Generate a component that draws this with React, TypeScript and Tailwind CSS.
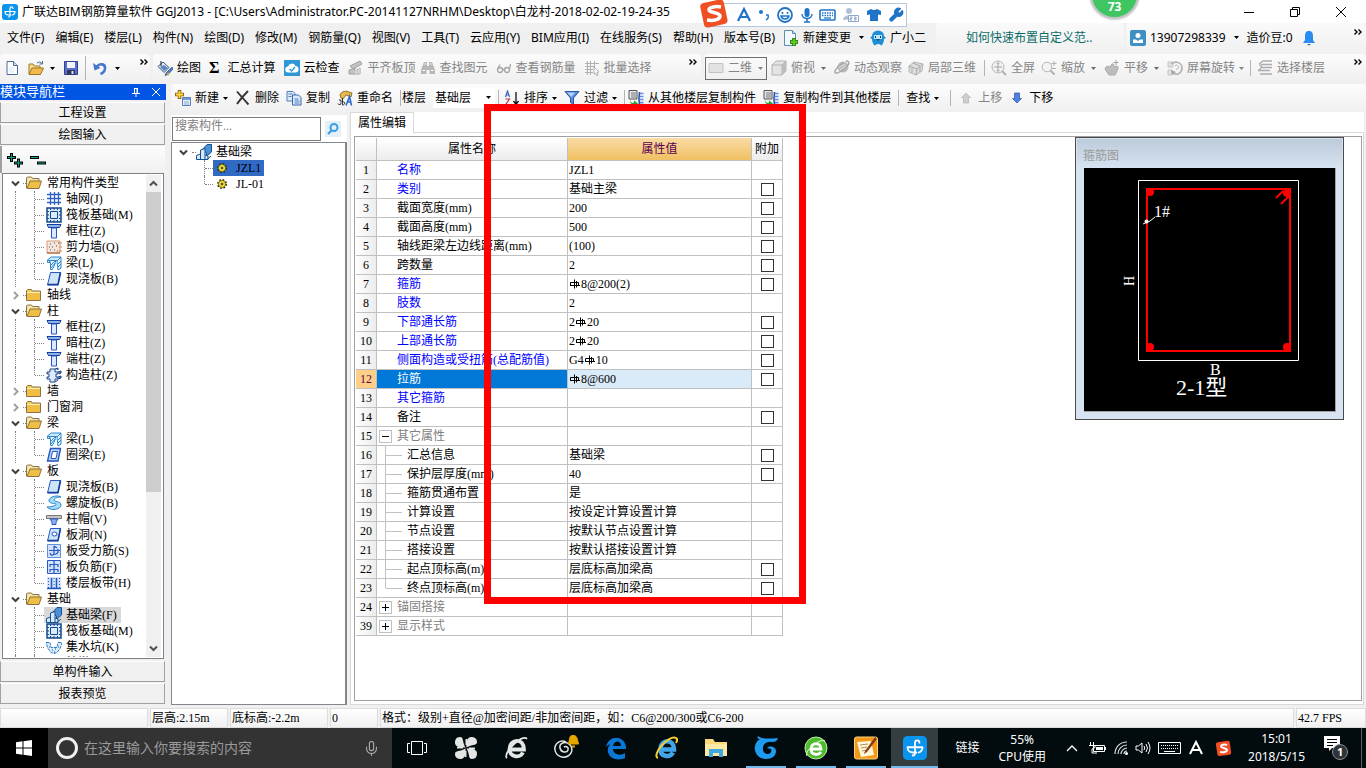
import type { ReactNode } from "react";
import { LuWrench, LuMic } from "react-icons/lu";

const ui = "[font-family:'Noto_Sans','Noto_Sans_CJK_SC',sans-serif]";
const song = "[font-family:'Liberation_Serif','Noto_Sans_CJK_SC',serif]";

/* ---------- icons ---------- */

function Svg({ children, size = 16, className = "" }: { children: ReactNode; size?: number; className?: string }) {
  return (
    <svg width={size} height={size} viewBox="0 0 16 16" fill="none" aria-hidden="true" className={`shrink-0 ${className}`}>
      {children}
    </svg>
  );
}

const icons: Record<string, ReactNode> = {
  doc: (
    <Svg>
      <path d="M3 1.500h6.500l4 4v9H3z" fill="#fff" stroke="#4b6c94" />
      <path d="M9.500 1.500v4h4" fill="#cfe0f2" stroke="#4b6c94" />
      <path d="M5 7h5v6H5z" fill="#eaf3fb" />
    </Svg>
  ),
  open: (
    <Svg>
      <path d="M1 14V4h4l1.500 2H12v2" fill="#f7dc8c" stroke="#9b7420" />
      <path d="M1 14.500 4 8h11.500l-3 6.500z" fill="#f3b94a" stroke="#9b7420" />
      <path d="M9 3q3-2.500 5 .5M14.500 1v3h-3" stroke="#4a6f96" />
    </Svg>
  ),
  save: (
    <Svg>
      <path d="M1.500 1.500h13v13h-13z" fill="#5b6fc9" stroke="#31408e" />
      <path d="M4 2h8v6H4z" fill="#f1f4fd" />
      <path d="M4 10h8v4.500H4z" fill="#30355c" />
      <path d="M8.500 11h2v3h-2z" fill="#dfe5ff" />
    </Svg>
  ),
  undo: (
    <Svg>
      <path d="M4.500 7C8 2.500 13.500 4 13 8.500c-.2 3-2 4.500-4.500 5.500" stroke="#4677cf" strokeWidth="2.600" />
      <path d="M1 3l1.500 7.500L8.500 8z" fill="#4677cf" />
    </Svg>
  ),
  paint: (
    <Svg>
      <path d="M1 6.500 6 2l6 5.500-5 5z" fill="#dce8f5" stroke="#3f5a80" />
      <path d="M3 7l4-2 4 3-4 3z" fill="#5c86c2" />
      <path d="M4 1v5" stroke="#222" />
      <path d="M15 7 9 13l-1 2.500 3-1L16 9z" fill="#4c7ac5" stroke="#2b4f8e" strokeWidth=".7" />
      <path d="M10.500 13 12 15" stroke="#e3b53c" strokeWidth="2" />
    </Svg>
  ),
  cloud: (
    <Svg>
      <path d="M0 0h16v16H0z" fill="#2f97d6" />
      <path d="M4.500 12.500a3 3 0 0 1-.5-6 4 4 0 0 1 7.500-.5 3.300 3.300 0 0 1 .5 6.500z" fill="#fff" />
      <path d="m5.500 9 2 2 3.500-4" stroke="#2f97d6" strokeWidth="1.300" />
    </Svg>
  ),
  align: (
    <Svg>
      <path d="M2 6 12 1l2 3-9 5zM1 10l6-2v3l5-3v6H1z" fill="#c3c3c3" stroke="#9f9f9f" />
      <path d="M8 9v5M11 8v6" stroke="#eee" />
    </Svg>
  ),
  find: (
    <Svg>
      <path d="M4 2h3v4h2V2h3l3 8v4H9.500v-4h-3v4H1v-4z" fill="#b7b7b7" />
      <path d="M2.500 10.500H5M11 10.500h2.500M4.500 4H6M10 4h1.500" stroke="#fff" />
    </Svg>
  ),
  glasses: (
    <Svg>
      <circle cx="4" cy="10" r="2.500" stroke="#a4a4a4" strokeWidth="1.300" />
      <circle cx="11" cy="10" r="2.500" stroke="#a4a4a4" strokeWidth="1.300" />
      <path d="M6.500 9.500h2M1.500 9.500 4 4.500M13.500 9.500 14.500 4" stroke="#a4a4a4" strokeWidth="1.300" />
    </Svg>
  ),
  batch: (
    <Svg>
      <path d="M1 3.500h14M1 6.500h10M1 9.500h8M1 12.500h8M3.500 1v14M6.500 1v14M10.500 1v6" stroke="#b0b0b0" />
      <path d="m10 7 5 5-2 .3 1 2.700-1.500.5-1-2.500-1.500 1z" fill="#fff" stroke="#a0a0a0" strokeWidth=".8" />
    </Svg>
  ),
  flat: (
    <Svg>
      <path d="M1 3.500h14v9H1z" fill="#e2e2e2" stroke="#c4c4c4" />
    </Svg>
  ),
  cube: (
    <Svg>
      <path d="m1 5 4-4h10v10l-4 4H1z" fill="#e4e4e4" stroke="#b2b2b2" />
      <path d="M1 5h10v10M11 5l4-4" stroke="#b2b2b2" />
      <path d="m11 5 4-4v10l-4 4z" fill="#bdbdbd" />
    </Svg>
  ),
  orbit: (
    <Svg>
      <circle cx="9" cy="7" r="5.500" fill="#bcbcbc" />
      <path d="M12 1c5 0 3 5-3 9s-9 4-8 1 6-7 9-8" stroke="#a3a3a3" strokeWidth="1.400" />
      <path d="M5 7 11 4M6 10l6-4" stroke="#e2e2e2" />
    </Svg>
  ),
  part3d: (
    <Svg>
      <path d="m1 6 5-4 9 2-1 7-6 4-7-3z" fill="#dedede" stroke="#b4b4b4" />
      <path d="m1 6 8 3 6-5M9 9l-1 6M5 3l7 3v6M4 7.500v5" stroke="#a9a9a9" />
    </Svg>
  ),
  full: (
    <Svg>
      <circle cx="7" cy="7" r="6" fill="#f2f2f2" stroke="#b5b5b5" />
      <path d="M7 3v8M3 7h8M5.500 4 7 2.500 8.500 4M5.500 10 7 11.500 8.500 10" stroke="#a5a5a5" />
      <path d="m11 11 4 4" stroke="#b0b0b0" strokeWidth="2" />
    </Svg>
  ),
  zoom: (
    <Svg>
      <circle cx="6" cy="7" r="4.800" fill="#f4f4f4" stroke="#b5b5b5" />
      <path d="m9.500 10.500 4 4" stroke="#b0b0b0" strokeWidth="2" />
      <path d="M13 1v5M10.500 3.500h5M11 8.500h4" stroke="#b0b0b0" />
    </Svg>
  ),
  pan: (
    <Svg>
      <path d="M2 7c2-2 3 0 4 0l2-3c2-1 2 2 2 3l3-1c2 1 1 3 0 5l-2 4H5L1 9z" fill="#bdbdbd" stroke="#a9a9a9" />
      <path d="M12 0v5M9.500 2.500h5" stroke="#a5a5a5" />
    </Svg>
  ),
  rotate: (
    <Svg>
      <path d="M1 2h5v5H1zM1 10h4v5H1z" fill="#e3e3e3" stroke="#c3c3c3" />
      <path d="M4 4c5-4 11-1 11 4s-5 8-9 5" stroke="#b3b3b3" strokeWidth="1.600" />
      <path d="m4 10 1 5 4-3z" fill="#a6a6a6" />
      <path d="M8 6a2 2 0 1 1 1 3" stroke="#b3b3b3" />
    </Svg>
  ),
  floors: (
    <Svg>
      <path d="m2 4 4-3h9M4 4.500h11M5 7.500h10M1 10.500h12M3 14h12M2 4l3 3-4 4" stroke="#adadad" strokeWidth="1.300" />
    </Svg>
  ),
  add: (
    <Svg>
      <path d="M4.500 0v9M0 4.500h9" stroke="#8a6a1a" strokeWidth="3.500" />
      <path d="M4.500 1v7M1 4.500h7" stroke="#ffd23e" strokeWidth="1.800" />
      <path d="M7.500 7.500h8v8h-8z" fill="#e9f1fb" stroke="#5b7fb5" />
      <path d="M8 8h7v2H8z" fill="#6c9be0" />
      <path d="M9 12h5M9 14h5" stroke="#88a6d2" />
    </Svg>
  ),
  del: (
    <Svg>
      <path d="M2 1.500C5 5 9 9.500 13.500 14.500M13 1C9 5 5 9.500 2 14" stroke="#333" strokeWidth="1.900" />
    </Svg>
  ),
  copy: (
    <Svg>
      <path d="M1 1.500h6l2 2V11H1z" fill="#dcebfb" stroke="#4f7dbd" />
      <path d="M6.500 5h6L15 7.500V15H6.500z" fill="#dcebfb" stroke="#3a67ac" />
      <path d="M2.500 4h4M2.500 6.500h3M8.500 9h4M8.500 11h5M8.500 13h5" stroke="#4f7dbd" />
    </Svg>
  ),
  rename: (
    <Svg>
      <path d="M3 5C5 0 8 2 9 1l6 2-1 4-5-2-3 4-2-1z" fill="#e6b84c" stroke="#7c5b17" strokeWidth=".8" />
      <path d="M1 13.500a1.500 1.500 0 1 0 3-1V10H2M5.500 8v7c3 0 3-4 0-3" stroke="#333" />
      <path d="m9 15.500 3.500-9 2 9M10.500 12h3.500" stroke="#2b6bd0" strokeWidth="1.600" />
    </Svg>
  ),
  sort: (
    <Svg>
      <path d="m1.500 7 2-6 2 6M2.500 5h2" stroke="#3b66b8" strokeWidth="1.200" />
      <path d="M1.500 9h4l-4 6h4" stroke="#b23b4d" strokeWidth="1.200" />
      <path d="M12 2v12M9.500 11l2.500 3.500 2.500-3.500" stroke="#111" strokeWidth="1.300" />
    </Svg>
  ),
  filter: (
    <Svg>
      <path d="M1 1.500h14L9.500 8v6.500l-3-2V8z" fill="#5a8be0" stroke="#2b56a6" />
      <path d="M3 2.500h8L7.500 7z" fill="#b7d0f8" />
    </Svg>
  ),
  fromFloor: (
    <Svg>
      <path d="M1 .5h8V9H1z" fill="#e8e8e8" stroke="#555" />
      <path d="M3 3h5M3 5h5M3 7h5" stroke="#777" />
      <path d="M11.500 2q-1 7 0 13" stroke="#2d55a5" strokeWidth="1.600" />
      <path d="M12 3.500h3.500M12 6.500h3.500M12 9.500h3.500M12 12.500h3.500M12 14.500h3.500" stroke="#5f8fe0" strokeWidth="1.400" />
      <path d="M2 10q1 4 4 2.500V10.500l4 3-4 2.500v-1.500q-4 0-4-4.500" fill="#29a03b" />
    </Svg>
  ),
  up: (
    <Svg>
      <path d="m8 3 4.500 4.500h-2V13h-5V7.500h-2z" fill="#cdcdcd" stroke="#b5b5b5" strokeWidth=".7" />
    </Svg>
  ),
  down: (
    <Svg>
      <path d="m8 13 4.500-4.500h-2V3h-5v5.500h-2z" fill="#4f7fe0" stroke="#2a51a8" strokeWidth=".7" />
    </Svg>
  ),
  change: (
    <Svg>
      <path d="M1.500.5h8l3 3v12h-11z" fill="#f3f9fe" stroke="#5c8db5" />
      <path d="M9.500.5v3h3" fill="#bcd9ee" stroke="#5c8db5" />
      <path d="M11 8v8M7 12h8" stroke="#2e8f1a" strokeWidth="4" />
      <path d="M11 9v6M8 12h6" stroke="#69c62a" strokeWidth="2" />
    </Svg>
  ),
  mascot: (
    <Svg>
      <path d="M2 6a6 5.500 0 0 1 12 0l2 2-2 1c0 3-1 5-2.500 6.500L9 14l-2 .2-2.500 1.300C3 14 2 11 2 9L0 8z" fill="#1e8fd5" />
      <path d="M4 5h8v4H4z" fill="#bfe6fb" />
      <path d="M5.500 6v2M10.500 6v2M6.500 9.500q1.500 1 3 0" stroke="#083b66" />
    </Svg>
  ),
  folder: (
    <Svg>
      <path d="M.5 13.500v-10l1-1h4l1 1.500h8v9.500z" fill="#f4cb5e" stroke="#8b7440" />
      <path d="M1 6h13v7H1z" fill="#f0bd45" />
      <path d="M1 5.500h13" stroke="#fdeeb8" />
    </Svg>
  ),
  folderOpen: (
    <Svg>
      <path d="M.5 13V3l1-1h4l1 1.500H13V6" fill="#f8e4a8" stroke="#8b7440" />
      <path d="M1 13.500 4 6h11.500L13 13.500z" fill="#f0bd45" stroke="#8b7440" />
    </Svg>
  ),
  grid: (
    <Svg>
      <path d="M4.500 1v13M8.500 1v13M12.500 1v13M1 3.500h14M1 7.500h14M1 11.500h14" stroke="#2f62c5" strokeWidth="1.300" />
    </Svg>
  ),
  raft: (
    <Svg>
      <path d="M1 1h14v14H1z" fill="#d9ecfb" stroke="#15478c" strokeWidth="1.500" />
      <path d="M4.500 4.500h7v7h-7zM4.500 1v2M8 1v2M11.500 1v2M4.500 13v2M8 13v2M11.500 13v2M1 4.500h2M1 8h2M1 11.500h2M13 4.500h2M13 8h2M13 11.500h2" stroke="#15478c" />
    </Svg>
  ),
  column: (
    <Svg>
      <path d="M1 1.500h14l-1.500 3h-11z" fill="#8fb2ee" stroke="#123f9c" />
      <path d="M5.500 5h5v10h-5z" fill="#dce9ff" stroke="#2457c4" />
    </Svg>
  ),
  wall: (
    <Svg>
      <path d="M1 2h13v12H1z" fill="#f5e5dc" stroke="#d79a78" />
      <path d="M4 5h1M8 4h1M6 8h1M10 7h1M4 11h1M8 11h1M11 12h1M3 8h1M12 4h1" stroke="#555" />
      <path d="M1 14h13" stroke="#a3542c" />
      <path d="M13 4h3M13 8h3M13 12h3" stroke="#e08b3c" />
    </Svg>
  ),
  beam: (
    <Svg>
      <path d="M1 5.500 5 2h10l-3 3.500z" fill="#cfe8fb" stroke="#2a86cf" />
      <path d="M1.500 5.500h8v2l-3 7h-2v-7h-3zM11 6l4-4v11l-3 2z" fill="#e9f6ff" stroke="#2a86cf" />
      <path d="m3 7 2-1.500M5 10l4-4M5 13l4-5M12 9l3-3M12 12l3-3" stroke="#2a86cf" />
    </Svg>
  ),
  slab: (
    <Svg>
      <path d="M4.500 1.500h10L12 14H1.500z" fill="#cfe3fb" stroke="#2457c4" />
      <path d="M1.500 13.500h10.500l2.500-12" stroke="#123f9c" strokeWidth="1.600" />
    </Svg>
  ),
  tie: (
    <Svg>
      <path d="M4 2h5v3h3v2h-2v3h2v2H9v3H4v-3H1v-2h2V7H1V5h3z" fill="#dce9ff" stroke="#1c4287" />
      <path d="m9 2 3-1v2M12 5l3-1v2l-2 1M12 10l3-1v2l-3 1M9 15l3-2" fill="#4f7dbd" stroke="#1c4287" />
    </Svg>
  ),
  ring: (
    <Svg>
      <path d="M4.500 1.500h10L12 14H1.500z" fill="#b9d2f7" stroke="#2457c4" strokeWidth="1.400" />
      <path d="M6.500 4.500h5L10 11.500H5z" fill="#fff" stroke="#2457c4" />
    </Svg>
  ),
  spiral: (
    <Svg>
      <path d="M15 2C10-1 2 3 3 6s6 2 7 3-4 3-9 3c3 4 14 3 14-2 0-4-7-3-7-5s4-3 7-3z" fill="#a5dcf8" stroke="#2383cc" />
    </Svg>
  ),
  cap: (
    <Svg>
      <path d="M.5 4.500h15v3H.5z" fill="#c4c4c4" stroke="#777" />
      <path d="M4 8h8l-2 3v2.500H6V11z" fill="#8db2f2" stroke="#2457c4" />
    </Svg>
  ),
  hole: (
    <Svg>
      <path d="M4.500 1.500h10L12 14H1.500z" fill="#cfe3fb" stroke="#2457c4" />
      <path d="M1.500 13.500h10.500l2.500-12" stroke="#123f9c" strokeWidth="1.500" />
      <ellipse cx="8.500" cy="7" rx="2.500" ry="2" fill="#fff" stroke="#2457c4" />
    </Svg>
  ),
  stress: (
    <Svg>
      <path d="M1.500 1.500h13v13h-13z" fill="#d3e2fb" stroke="#5f8fe0" />
      <path d="M3 7.500h11M8 3v8q-3 3-4-1M8 3l3 2M12 6v3q-1 3-4 2" stroke="#2457c4" strokeWidth="1.200" />
    </Svg>
  ),
  negative: (
    <Svg>
      <path d="M1.500 1.500h13v13h-13z" fill="#d3e2fb" stroke="#2457c4" />
      <path d="M8 2v12M4 5.500h8M4 10.500h8M4 5v3M12 5v3M4 10v3M12 10v3" stroke="#2457c4" strokeWidth="1.200" />
    </Svg>
  ),
  strip: (
    <Svg>
      <path d="M1 2h14v12H1z" fill="#d3e2fb" />
      <path d="M1 13.500h14M5.500 3v10M10.500 3v10" stroke="#2457c4" strokeWidth="1.500" />
      <path d="M2.500 3v10M8 3v10M13.500 3v10" stroke="#2457c4" strokeDasharray="1 2" />
    </Svg>
  ),
  footing: (
    <Svg>
      <path d="M6 6 11 .5h4.500V8l-5 4.500V9z" fill="#4a90d6" stroke="#16518f" />
      <path d="M.5 15.500v-4l4-1.500V6L9 4.500V11l3 1v3.500z" fill="#d5e9fa" stroke="#16518f" />
      <path d="M4.500 10v5M9 11v4M11 15.500l4-3.500" stroke="#16518f" />
    </Svg>
  ),
  pit: (
    <Svg>
      <path d="M0 3.500h4l1 5h6l1-5h4l-2 6-3 4-3 1-3-1-3-4z" fill="#d8ecfc" stroke="#2878c8" strokeDasharray="3 1" />
      <path d="M3 8h1M6 11h1M9 10h1M12 8h1M8 13h1" stroke="#16518f" />
    </Svg>
  ),
  gear: (
    <Svg>
      <circle cx="8" cy="8" r="4" stroke="#222" strokeWidth="2" strokeDasharray="1.600 1.550" />
      <circle cx="8" cy="8" r="3.500" fill="#ffef3c" stroke="#7a7000" />
      <circle cx="8" cy="8" r="1" fill="#fff" stroke="#222" />
    </Svg>
  ),
};

function GlodonMark({ size }: { size: number }) {
  return (
    <Svg size={size}>
      <rect width="16" height="16" rx="3" fill="#0a94ee" />
      <path
        d="M8 4.500V11.500q0 1.500-1.500 1.500M3 7.500h10M3 7.500c0 2.500 2 3.500 3.500 3.500H9M8 4.500c0-2.200 3-2.200 3 0M13 7.500c0 2-1 3-2.500 3.500"
        stroke="#fff"
        strokeWidth="1.200"
        strokeLinecap="round"
      />
    </Svg>
  );
}

function Caret({ className = "" }: { className?: string }) {
  return (
    <svg width="5" height="3" viewBox="0 0 5 3" aria-hidden="true" className={`shrink-0 ${className}`}>
      <path d="M0 0h5L2.500 3z" fill="currentColor" />
    </svg>
  );
}

function Chevron({ dir, className = "" }: { dir: "up" | "down" | "right"; className?: string }) {
  const d = { up: "M1 6.500 4.500 3 8 6.500", down: "M1 2.500 4.500 6 8 2.500", right: "M3 1l3.500 3.500L3 8" }[dir];
  return (
    <svg width="9" height="9" viewBox="0 0 9 9" fill="none" aria-hidden="true" className={`shrink-0 ${className}`}>
      <path d={d} stroke="currentColor" strokeWidth="2" />
    </svg>
  );
}

function More({ className = "" }: { className?: string }) {
  return (
    <svg width="8" height="6" viewBox="0 0 8 6" fill="none" aria-hidden="true" className={`shrink-0 ${className}`}>
      <path d="m.5.5 2.500 2.500L.5 5.500M4.500.5 7 3 4.500 5.500" stroke="#000" strokeWidth="1.400" />
    </svg>
  );
}

// HRB400 bar grade sign, drawn because no font carries it
function Rebar() {
  return (
    <svg width="12" height="12" viewBox="0 0 12 12" fill="none" role="img" aria-label="HRB400" className="inline-block align-[-2px]">
      <path d="M1.500 8V4.500h8v3H1.500M5.500 1.500v9M7.500 3v6.500M1 7.500h10" stroke="#000" />
    </svg>
  );
}

/* ---------- toolbars ---------- */

type ToolProps = { icon?: string; label: string; caret?: boolean; disabled?: boolean; className?: string };

function Tool({ icon, label, caret, disabled, className = "" }: ToolProps) {
  return (
    <button
      type="button"
      disabled={disabled}
      className={`flex shrink-0 items-center gap-1 whitespace-nowrap ${disabled ? "text-[#858585]" : "text-black"} ${className}`}
    >
      {icon && icons[icon]}
      <span>{label}</span>
      {caret && <Caret />}
    </button>
  );
}

function Sep({ className = "" }: { className?: string }) {
  return <span className={`h-4 w-px shrink-0 bg-[#b4b4b4] ${className}`} />;
}

const menus = [
  "文件(F)", "编辑(E)", "楼层(L)", "构件(N)", "绘图(D)", "修改(M)", "钢筋量(Q)", "视图(V)",
  "工具(T)", "云应用(Y)", "BIM应用(I)", "在线服务(S)", "帮助(H)", "版本号(B)",
];

function TitleBar() {
  return (
    <header className="flex h-[23px] shrink-0 items-center bg-white">
      <span className="ml-0.5">
        <GlodonMark size={16} />
      </span>
      <h1 className="ml-1 flex-1 overflow-hidden text-xs leading-5 whitespace-nowrap">
        广联达BIM钢筋算量软件 GGJ2013 - [C:\Users\Administrator.PC-20141127NRHM\Desktop\白龙村-2018-02-02-19-24-35
      </h1>
      <div className="mr-5 flex items-center gap-9">
        <button type="button" aria-label="最小化">
          <svg width="10" height="10" viewBox="0 0 10 10"><path d="M0 5.500h10" stroke="#000" /></svg>
        </button>
        <button type="button" aria-label="还原">
          <svg width="10" height="10" viewBox="0 0 10 10" fill="none">
            <path d="M.5 2.500h7v7h-7zM2.500 2.500v-2h7v7h-2" stroke="#000" />
          </svg>
        </button>
        <button type="button" aria-label="关闭">
          <svg width="10" height="10" viewBox="0 0 10 10"><path d="m0 0 10 10M10 0 0 10" stroke="#000" /></svg>
        </button>
      </div>
    </header>
  );
}

function MenuBar() {
  return (
    <nav className="flex h-[31px] shrink-0 items-stretch text-xs leading-4 whitespace-nowrap">
      <div className="flex items-center gap-[11px] pb-0.5 pl-[7px]">
        {menus.map((m) => (
          <button key={m} type="button">{m}</button>
        ))}
      </div>
      <div className="flex items-center pb-0.5 pl-2">
        <Tool icon="change" label="新建变更" />
        <Caret className="ml-2" />
        <Tool icon="mascot" label="广小二" className="ml-1.5" />
      </div>
      <div className="ml-auto flex w-[188px] items-center rounded-t bg-gradient-to-b from-[#fafafa] to-[#f0f0f0] pb-0.5 pl-[30px]">
        <a href="#tips" className="text-[#0a6b68]">如何快速布置自定义范..</a>
      </div>
      <div className="ml-0.5 flex w-[240px] items-center rounded-t bg-gradient-to-b from-[#fafafa] to-[#f0f0f0] pb-0.5 pl-1">
        <Svg>
          <rect width="16" height="16" rx="2" fill="#3d8fc4" />
          <circle cx="8" cy="5.500" r="2.500" fill="#fff" />
          <path d="M3 13V9.500h3L8 11l2-1.500h3V13z" fill="#fff" />
        </Svg>
        <span className="ml-1">13907298339</span>
        <Caret className="ml-2" />
        <span className="ml-2">造价豆:0</span>
        <Svg className="ml-2">
          <path d="M8 1c3 0 4 2 4 5v4l2 3H2l2-3V6c0-3 1-5 4-5z" fill="#2a8cf0" />
          <path d="M6 14h4l-2 1.500z" fill="#1b5fb0" />
        </Svg>
        <More className="mr-1 mb-3 ml-auto" />
      </div>
    </nav>
  );
}

function MainToolbar() {
  const group = "flex shrink-0 items-center rounded-t bg-gradient-to-b from-[#fcfcfc] to-[#efefef]";
  return (
    <div className="mb-0.5 flex h-7 shrink-0 gap-[3px] text-xs leading-4">
      <div className={`${group} w-[150px] pl-1`}>
        <button type="button" aria-label="新建">{icons.doc}</button>
        <button type="button" aria-label="打开" className="ml-2">{icons.open}</button>
        <Caret className="ml-1.5" />
        <button type="button" aria-label="保存" className="ml-2">{icons.save}</button>
        <Sep className="ml-1.5 h-6" />
        <button type="button" aria-label="撤销" className="ml-1.5">{icons.undo}</button>
        <Caret className="ml-[7px]" />
        <More className="mr-0.5 mb-3 ml-auto" />
      </div>
      <div className={`${group} w-[548px] gap-2 pl-1`}>
        <Tool icon="paint" label="绘图" />
        <button type="button" className="flex items-center gap-2">
          <b className={`${song} text-base leading-4`}>Σ</b>
          <span>汇总计算</span>
        </button>
        <Tool icon="cloud" label="云检查" />
        <Tool icon="align" label="平齐板顶" disabled />
        <Tool icon="find" label="查找图元" disabled className="-ml-1" />
        <Tool icon="glasses" label="查看钢筋量" disabled />
        <Tool icon="batch" label="批量选择" disabled />
        <More className="mr-1 mb-3 ml-auto" />
      </div>
      <div className={`${group} min-w-0 flex-1 gap-1.5 pl-px`}>
        <button type="button" disabled className="flex h-[23px] w-[62px] items-center gap-1 border border-[#6f6f6f] pl-0.5 text-[#858585]">
          {icons.flat}
          <span>二维</span>
          <Caret className="ml-0.5" />
        </button>
        <Tool icon="cube" label="俯视" disabled className="-ml-0.5" />
        <Caret className="text-[#6b6b6b]" />
        <Tool icon="orbit" label="动态观察" disabled className="ml-0.5" />
        <Tool icon="part3d" label="局部三维" disabled />
        <Sep className="ml-0.5" />
        <Tool icon="full" label="全屏" disabled />
        <Tool icon="zoom" label="缩放" disabled />
        <Caret className="mr-0.5 text-[#6b6b6b]" />
        <Tool icon="pan" label="平移" disabled />
        <Caret className="mr-0.5 text-[#6b6b6b]" />
        <Tool icon="rotate" label="屏幕旋转" disabled caret />
        <Sep />
        <Tool icon="floors" label="选择楼层" disabled />
        <More className="mr-1 mb-3 ml-auto" />
      </div>
    </div>
  );
}

function EditToolbar() {
  return (
    <div className="flex h-7 shrink-0 items-center gap-[7px] rounded-t bg-gradient-to-b from-[#fcfcfc] to-[#f0f0f0] pl-1 text-xs leading-4">
      <Tool icon="add" label="新建" caret />
      <Tool icon="del" label="删除" />
      <Tool icon="copy" label="复制" />
      <Tool icon="rename" label="重命名" />
      <Sep />
      <label htmlFor="floor" className="-ml-1.5 shrink-0">楼层</label>
      <span className="relative flex h-5 w-[62px] shrink-0 items-center bg-white">
        <select id="floor" className="w-full appearance-none bg-white pl-0.5 text-xs leading-4">
          <option>基础层</option>
        </select>
        <Caret className="pointer-events-none absolute top-2 right-1" />
      </span>
      <Sep className="-ml-1" />
      <Tool icon="sort" label="排序" caret className="-ml-0.5" />
      <Tool icon="filter" label="过滤" caret />
      <Sep />
      <Tool icon="fromFloor" label="从其他楼层复制构件" className="-ml-1" />
      <Tool icon="fromFloor" label="复制构件到其他楼层" />
      <Sep />
      <Tool label="查找" caret />
      <Sep className="ml-1" />
      <Tool icon="up" label="上移" disabled />
      <Tool icon="down" label="下移" />
    </div>
  );
}

/* ---------- module navigation ---------- */

type TreeItem = { text: string; icon?: string; open?: boolean; active?: boolean };

const tree: TreeItem[] = [
  { text: "常用构件类型", open: true },
  { text: "轴网(J)", icon: "grid" },
  { text: "筏板基础(M)", icon: "raft" },
  { text: "框柱(Z)", icon: "column" },
  { text: "剪力墙(Q)", icon: "wall" },
  { text: "梁(L)", icon: "beam" },
  { text: "现浇板(B)", icon: "slab" },
  { text: "轴线" },
  { text: "柱", open: true },
  { text: "框柱(Z)", icon: "column" },
  { text: "暗柱(Z)", icon: "column" },
  { text: "端柱(Z)", icon: "column" },
  { text: "构造柱(Z)", icon: "tie" },
  { text: "墙" },
  { text: "门窗洞" },
  { text: "梁", open: true },
  { text: "梁(L)", icon: "beam" },
  { text: "圈梁(E)", icon: "ring" },
  { text: "板", open: true },
  { text: "现浇板(B)", icon: "slab" },
  { text: "螺旋板(B)", icon: "spiral" },
  { text: "柱帽(V)", icon: "cap" },
  { text: "板洞(N)", icon: "hole" },
  { text: "板受力筋(S)", icon: "stress" },
  { text: "板负筋(F)", icon: "negative" },
  { text: "楼层板带(H)", icon: "strip" },
  { text: "基础", open: true },
  { text: "基础梁(F)", icon: "footing", active: true },
  { text: "筏板基础(M)", icon: "raft" },
  { text: "集水坑(K)", icon: "pit" },
  { text: "柱墩(Y)", icon: "cap" },
];

function TreeRow({ item, last }: { item: TreeItem; last: boolean }) {
  if (!item.icon) {
    return (
      <li className="flex h-4 items-center pl-2">
        <Chevron dir={item.open ? "down" : "right"} className={item.open ? "text-[#404040]" : "text-[#a0a0a0]"} />
        <span className="ml-[3px] w-[3px] border-t border-dotted border-[#808080]" />
        {item.open ? icons.folderOpen : icons.folder}
        <span className="ml-[5px]">{item.text}</span>
      </li>
    );
  }
  return (
    <li className="flex h-4 items-center pl-3">
      <span className="h-4 w-[19px] border-l border-dotted border-[#808080]" />
      <span className={`w-px self-start border-l border-dotted border-[#808080] ${last ? "h-2" : "h-4"}`} />
      <span className="w-[9px] border-t border-dotted border-[#808080]" />
      <span className={`flex h-4 items-center gap-1 pr-1 pl-0.5 ${item.active ? "bg-[#d9d9d9]" : ""}`}>
        {icons[item.icon]}
        <span>{item.text}</span>
      </span>
    </li>
  );
}

function ModuleButton({ children }: { children: ReactNode }) {
  return (
    <button type="button" className="mb-px h-[21px] w-full shrink-0 border border-[#a0a0a0] border-t-white bg-[#f0f0f0] leading-4">
      {children}
    </button>
  );
}

function ModulePanel() {
  return (
    <aside className={`${song} flex w-[166px] shrink-0 flex-col pb-[3px] text-xs leading-4`}>
      <div className="flex h-4 shrink-0 items-center bg-[#0055e5] text-[13px] text-white">
        <h2 className="flex-1">模块导航栏</h2>
        <svg width="8" height="9" viewBox="0 0 8 9" fill="none" aria-hidden="true" className="mr-3">
          <path d="M2 .5h4M2.500 0v5M5.500 0v5M0 5.500h8M4 5v4M5 0v5" stroke="#fff" />
        </svg>
        <svg width="8" height="8" viewBox="0 0 8 8" aria-hidden="true" className="mr-1.5">
          <path d="m0 0 8 8M8 0 0 8" stroke="#fff" />
        </svg>
      </div>
      <div className="flex min-h-0 flex-1 flex-col pt-0.5 pr-px">
        <ModuleButton>工程设置</ModuleButton>
        <ModuleButton>绘图输入</ModuleButton>
        <div className="flex h-[27px] shrink-0 items-center gap-[7px] border-l-2 border-[#a0a0a0] bg-gradient-to-b from-[#fdfdfd] to-[#f0f0f0] pl-[5px]">
          <svg width="16" height="16" viewBox="0 0 16 16" fill="none" aria-label="展开" role="img">
            <path d="M4.500 1v9M0 5.500h9M11.500 6.500v9M7 11h9" stroke="#000" strokeWidth="3" />
            <path d="M4.500 2v7M1 5.500h7M11.500 7.500v7M8 11h7" stroke="#10a090" />
          </svg>
          <svg width="16" height="16" viewBox="0 0 16 16" fill="none" aria-label="折叠" role="img">
            <path d="M0 5.500h9M7 11h9" stroke="#000" strokeWidth="3" />
            <path d="M1 5.500h7M8 11h7" stroke="#10a090" />
          </svg>
        </div>
        <div className="mr-px mb-0.5 ml-0.5 flex min-h-0 flex-1 border border-[#7d8088] bg-white py-px pr-0.5">
          <ul className="min-w-0 flex-1 overflow-hidden whitespace-nowrap">
            {tree.map((item, i) => (
              <TreeRow key={i} item={item} last={!tree[i + 1]?.icon} />
            ))}
          </ul>
          <div className="flex w-[15px] shrink-0 flex-col items-center bg-[#f0f0f0] text-[#505050]">
            <Chevron dir="up" className="my-1" />
            <div className="h-[300px] w-full bg-[#cdcdcd]" />
            <Chevron dir="down" className="mt-auto mb-1" />
          </div>
        </div>
        <ModuleButton>单构件输入</ModuleButton>
        <ModuleButton>报表预览</ModuleButton>
      </div>
    </aside>
  );
}

/* ---------- component list ---------- */

function ComponentPanel() {
  return (
    <section className={`${song} flex w-[176px] shrink-0 flex-col pt-[3px] pb-[3px] text-xs leading-4`}>
      <div className="flex h-[27px] shrink-0 items-center bg-white">
        <input
          aria-label="搜索构件"
          placeholder="搜索构件..."
          className="ml-px h-6 w-[149px] border border-[#7a7a7a] bg-white px-0.5 pb-1 text-xs placeholder:text-[#808080]"
        />
        <button type="button" aria-label="搜索" className="ml-1">
          <Svg className="bg-[#e2f0fa]">
            <circle cx="9" cy="6.500" r="3.500" stroke="#3a9ee0" strokeWidth="2" />
            <path d="M6.500 9.500 3 13" stroke="#3a9ee0" strokeWidth="2.200" />
          </Svg>
        </button>
      </div>
      <ul className="min-h-0 flex-1 border border-[#828790] border-r-2 bg-white pt-px">
        <li className="flex h-4 items-center pl-[7px]">
          <Chevron dir="down" className="text-[#404040]" />
          <span className="ml-1 w-1 border-t border-dotted border-[#808080]" />
          {icons.footing}
          <span className="ml-1">基础梁</span>
        </li>
        {["JZL1", "JL-01"].map((name, i) => (
          <li key={name} className="flex h-4 items-center pl-8">
            <span className={`w-px self-start border-l border-dotted border-[#808080] ${i ? "h-2" : "h-4"}`} />
            <span className="w-2 border-t border-dotted border-[#808080]" />
            <span className={`flex h-4 items-center gap-1.5 px-px ${i ? "" : "w-[51px] bg-[#316ac5]"}`}>
              {icons.gear}
              <span>{name}</span>
            </span>
          </li>
        ))}
      </ul>
    </section>
  );
}

/* ---------- property grid ---------- */

type Prop = { no: number; name: string; value?: ReactNode; check?: boolean; blue?: boolean; group?: "open" | "closed"; child?: boolean; selected?: boolean };

const props: Prop[] = [
  { no: 1, name: "名称", value: "JZL1", blue: true },
  { no: 2, name: "类别", value: "基础主梁", check: true, blue: true },
  { no: 3, name: "截面宽度(mm)", value: "200", check: true },
  { no: 4, name: "截面高度(mm)", value: "500", check: true },
  { no: 5, name: "轴线距梁左边线距离(mm)", value: "(100)", check: true },
  { no: 6, name: "跨数量", value: "2", check: true },
  { no: 7, name: "箍筋", value: <><Rebar />8@200(2)</>, check: true, blue: true },
  { no: 8, name: "肢数", value: "2", blue: true },
  { no: 9, name: "下部通长筋", value: <>2<Rebar />20</>, check: true, blue: true },
  { no: 10, name: "上部通长筋", value: <>2<Rebar />20</>, check: true, blue: true },
  { no: 11, name: "侧面构造或受扭筋(总配筋值)", value: <>G4<Rebar />10</>, check: true, blue: true },
  { no: 12, name: "拉筋", value: <><Rebar />8@600</>, check: true, selected: true },
  { no: 13, name: "其它箍筋", blue: true },
  { no: 14, name: "备注", check: true },
  { no: 15, name: "其它属性", group: "open" },
  { no: 16, name: "汇总信息", value: "基础梁", check: true, child: true },
  { no: 17, name: "保护层厚度(mm)", value: "40", check: true, child: true },
  { no: 18, name: "箍筋贯通布置", value: "是", child: true },
  { no: 19, name: "计算设置", value: "按设定计算设置计算", child: true },
  { no: 20, name: "节点设置", value: "按默认节点设置计算", child: true },
  { no: 21, name: "搭接设置", value: "按默认搭接设置计算", child: true },
  { no: 22, name: "起点顶标高(m)", value: "层底标高加梁高", check: true, child: true },
  { no: 23, name: "终点顶标高(m)", value: "层底标高加梁高", check: true, child: true },
  { no: 24, name: "锚固搭接", group: "closed" },
  { no: 39, name: "显示样式", group: "closed" },
];

function NameCell({ p, last }: { p: Prop; last: boolean }) {
  if (p.child) {
    return (
      <div className="flex h-[18px] items-center pl-2">
        <span className={`w-px self-start bg-[#c0c0c0] ${last ? "h-[9px]" : "h-[19px]"}`} />
        <span className="mr-[5px] h-px w-4 bg-[#c0c0c0]" />
        {p.name}
      </div>
    );
  }
  if (p.group) {
    return (
      <div className="flex h-[18px] items-center gap-[5px] pl-0.5 text-[#808080]">
        <button type="button" aria-label={p.name} className="flex size-[13px] items-center justify-center border border-[#c0c0c0] bg-white">
          <svg width="7" height="7" viewBox="0 0 7 7" aria-hidden="true">
            <path d={p.group === "open" ? "M0 3.500h7" : "M0 3.500h7M3.500 0v7"} stroke="#000" />
          </svg>
        </button>
        {p.name}
      </div>
    );
  }
  const tone = p.selected ? "bg-[#0078d7] text-white" : p.blue ? "text-[#0000ff]" : "";
  return <div className={`flex h-[18px] items-center pl-5 ${tone}`}>{p.name}</div>;
}

function PropertyTable() {
  const head = "h-[23px] border-r border-b border-[#c0c0c0] bg-gradient-to-b from-white to-[#ececec] p-0 font-normal";
  const cell = "h-[19px] border-r border-b border-[#c0c0c0] p-0";
  return (
    <table className="w-[427px] table-fixed border-separate border-spacing-0 whitespace-nowrap">
      <colgroup>
        <col className="w-[21px]" />
        <col className="w-[191px]" />
        <col className="w-[184px]" />
        <col className="w-[31px]" />
      </colgroup>
      <thead>
        <tr>
          <th className={head} />
          <th className={head}>属性名称</th>
          <th className="h-[23px] border-r border-b border-[#c0c0c0] bg-gradient-to-b from-[#fbdba4] to-[#f0c060] p-0 font-normal text-[#5c0050]">属性值</th>
          <th className={head}>附加</th>
        </tr>
      </thead>
      <tbody>
        {props.map((p, i) => (
          <tr key={p.no}>
            <td className={`${cell} text-center ${p.selected ? "bg-[#ffcf87] text-[#5c0050]" : "bg-gradient-to-r from-white to-[#ececec]"}`}>{p.no}</td>
            <td className={cell}>
              <NameCell p={p} last={!props[i + 1]?.child} />
            </td>
            <td className={`${cell} pl-px ${p.selected ? "bg-[#d9eaf8]" : ""}`}>
              <div className="h-[18px] leading-[18px]">{p.value}</div>
            </td>
            <td className={cell}>
              {p.check && (
                <input
                  type="checkbox"
                  aria-label={`附加 ${p.name}`}
                  className="mx-auto block size-[13px] appearance-none border border-[#333] bg-white checked:bg-[#333]"
                />
              )}
            </td>
          </tr>
        ))}
      </tbody>
    </table>
  );
}

function StirrupWindow() {
  return (
    <div className="absolute top-0 right-[17px] w-[269px] border border-[#4a4a4a] bg-[#d7e3f1] p-px">
      <div className="flex h-[29px] items-end bg-gradient-to-b from-[#bccbda] to-[#d7e3f1] pb-1 pl-1.5 text-[#999]">箍筋图</div>
      <svg viewBox="0 0 251 243" className={`${song} mx-auto mb-1.5 block w-[252px] border-r border-b border-[#a0a0a0] bg-black`} fill="none">
        <path d="M54.500 12.500h160v180h-160z" stroke="#fff" />
        <path d="M63 21h143v162H63z" stroke="#f00" strokeWidth="2" />
        <g fill="#f00">
          <circle cx="66" cy="24" r="4" />
          <circle cx="203" cy="25" r="4" />
          <circle cx="66" cy="179" r="4" />
          <circle cx="203" cy="179" r="4" />
        </g>
        <path d="m192 30 7-7M197 36l8-8" stroke="#f00" strokeWidth="2" />
        <path d="m59 56 7-3 5-4" stroke="#fff" />
        <circle cx="62.500" cy="53.500" r="2" fill="#fff" />
        <g fill="#fff">
          <text x="70" y="49" fontSize="16">1#</text>
          <text x="50" y="118" fontSize="14" transform="rotate(-90 50 118)">H</text>
          <text x="126" y="207" fontSize="16">B</text>
          <text x="92" y="227" fontSize="22">2-1型</text>
        </g>
      </svg>
    </div>
  );
}

function PropertyPanel() {
  return (
    <main className={`${song} relative ml-[3px] flex min-w-0 flex-1 flex-col pb-[3px] text-xs leading-4`}>
      <div className="flex h-[21px] shrink-0">
        <button type="button" className="w-16 border-t border-r border-l border-[#d9d9d9] bg-white">属性编辑</button>
        <div className="mr-0.5 flex-1 border-b border-[#d9d9d9] bg-white" />
      </div>
      <div className="mr-0.5 flex min-h-0 flex-1 border-r border-b border-l border-[#d9d9d9] bg-white pt-[3px] pr-px pb-[3px] pl-[3px]">
        <div className="relative flex-1 border border-[#a0a0a0] bg-white pt-px pl-px">
          <PropertyTable />
          <StirrupWindow />
        </div>
      </div>
      <div className="pointer-events-none absolute -top-2 left-[134px] h-[500px] w-[322px] border-[7px] border-[#f00]" />
    </main>
  );
}

/* ---------- floating widgets ---------- */

function InputMethodBar() {
  return (
    <div className="absolute top-0 left-[700px] flex h-[27px] w-[207px] items-center">
      <div className="absolute inset-x-0 top-[3px] bottom-0 ml-2 border border-[#b5c7dc] bg-white" />
      <svg width="29" height="28" viewBox="0 0 29 28" fill="none" aria-label="搜狗" role="img" className="relative">
        <rect x="2" y="1" width="24" height="25" rx="4" fill="#f04e23" transform="rotate(-12 14 14)" />
        <path d="M21 7c-5-1-12 0-12 3s11 2 11 6-7 5-13 4" stroke="#fff" strokeWidth="3.500" />
      </svg>
      <div className="relative flex flex-1 items-center justify-around pt-0.5 pl-1 text-[#1f74c8]">
        <svg width="16" height="16" viewBox="0 0 16 16" fill="none"><path d="M2 14 8 2l6 12M4.500 10h7" stroke="#1f74c8" strokeWidth="2.200" /></svg>
        <svg width="12" height="16" viewBox="0 0 12 16"><circle cx="3" cy="5" r="2" fill="#1f74c8" /><path d="M8 8h2c1 3 0 4-2 5" stroke="#1f74c8" strokeWidth="1.500" fill="none" /></svg>
        <svg width="18" height="18" viewBox="0 0 18 18" fill="none">
          <circle cx="9" cy="9" r="7" stroke="#1f74c8" strokeWidth="1.800" />
          <path d="M6.500 6v2M11.500 6v2M5 10c1 4 7 4 8 0z" stroke="#1f74c8" strokeWidth="1.500" />
        </svg>
        <svg width="14" height="16" viewBox="0 0 14 16" fill="none">
          <rect x="4.500" y="1" width="5" height="9" rx="2.500" fill="#1f74c8" />
          <path d="M2 7c0 6 10 6 10 0M7 12v3M4 15h6" stroke="#1f74c8" strokeWidth="1.500" />
        </svg>
        <svg width="17" height="14" viewBox="0 0 17 14" fill="none">
          <rect x="1" y="2" width="15" height="10" rx="1" stroke="#1f74c8" strokeWidth="1.600" />
          <path d="M3 5h11M3 7.500h11" stroke="#1f74c8" strokeDasharray="1.500 1" strokeWidth="1.500" />
          <path d="M5 10h7" stroke="#1f74c8" strokeWidth="1.300" />
        </svg>
        <svg width="18" height="16" viewBox="0 0 18 16" fill="none">
          <circle cx="7" cy="4" r="3" fill="#aebfd6" />
          <path d="M1 13c0-6 12-6 12-1z" fill="#aebfd6" />
          <path d="M6.500 8.500h10v6h-10z" fill="#fff" stroke="#8ea9cb" />
          <path d="M8 10h2v1.500H8V13h2M12 10h2v3h-2M12 11.500h2" stroke="#8ea9cb" />
        </svg>
        <svg width="16" height="14" viewBox="0 0 16 14"><path d="M1 3 5 1q3 2 6 0l4 2v4l-3-.5V13H4V6.500L1 7z" fill="#1f74c8" /></svg>
        <LuWrench size={16} fill="#1f74c8" />
      </div>
    </div>
  );
}

function SpeedBall() {
  return (
    <div className="absolute -top-[30px] left-[1090px] flex size-[49px] items-end justify-center rounded-full border-2 border-[#c2c6c4] bg-[#3fc662] pb-0.5 text-xs leading-4 font-bold text-white shadow ring-1 ring-[#d8d8d8]">
      73
    </div>
  );
}

/* ---------- bottom bars ---------- */

function StatusBar() {
  const box = "flex items-center border border-[#dcdcdc] bg-gradient-to-b from-white to-[#f0f0f0] pl-px";
  return (
    <footer className={`${song} flex h-5 shrink-0 gap-0.5 text-xs leading-4 whitespace-nowrap`}>
      <div className={`${box} w-[148px]`} />
      <div className={`${box} w-[78px]`}>层高:2.15m</div>
      <div className={`${box} w-[98px]`}>底标高:-2.2m</div>
      <div className={`${box} w-[48px]`}>0</div>
      <div className={`${box} flex-1`}>格式：级别+直径@加密间距/非加密间距，如：C6@200/300或C6-200</div>
      <div className={`${box} w-[70px]`}>42.7 FPS</div>
    </footer>
  );
}

const apps: { name: string; art: ReactNode; bar?: boolean }[] = [
  {
    name: "风扇",
    art: (
      <g>
        <path
          d="M11.500 11.500C8 6 10 1 6 1S1 4 1 7s4 5 10.500 4.500zM12.500 11.500C18 8 23 10 23 6s-3-5-6-5-5 4-4.500 10.500zM12.500 12.500C16 18 14 23 18 23s5-3 5-6-4-5-10.500-4.500zM11.500 12.500C6 16 1 14 1 18s3 5 6 5 5-4 4.500-10.500z"
          fill="#e4e6e6"
        />
        <path d="M3 11.500h6M12.500 3v6M15 12.500h6M11.500 15v6" stroke="#e4e6e6" strokeWidth="2" />
      </g>
    ),
  },
  {
    name: "浏览器",
    art: (
      <g fill="none" stroke="#e4e6e6">
        <path d="M5 13.500h15c0-12-14-11-14.500-.5C5 21 16 23 19 16.500" strokeWidth="3.800" />
        <path d="M3 22C-2 18 18-3 23 3" strokeWidth="1.800" />
      </g>
    ),
  },
  {
    name: "提醒",
    art: (
      <g fill="none">
        <path d="M12 6C6 3 0 8 1 14s8 9 13 6 5-9 1-12-10-1-9 4 7 5 8 2-2-4-4-3" stroke="#e4e6e6" strokeWidth="1.500" />
        <path d="M14.500 8c1.500-7 1-8.500 4.500-8.500S23 1 24.500 8z" fill="#e6a800" stroke="#e6a800" />
        <path d="M18 10.500h3" stroke="#e6a800" strokeWidth="2" />
      </g>
    ),
  },
  {
    name: "Edge",
    art: <path d="M2 11C5-3 23 0 22 13H9c0 6 8 7 12 4v5C10 27-1 18 6 8c-2 1-3 2-4 3zm7-1h8c0-6-7-6-8 0z" fill="#0a78d4" fillRule="evenodd" />,
  },
  {
    name: "Internet Explorer",
    art: (
      <g fill="none">
        <path d="M6 13.500h14c0-11-13-11-13.500-.5C6 21 16 22 19 16.500" stroke="#42a5ea" strokeWidth="4.500" />
        <path d="M4 22C-3 19 15-2 22 2c2 1 1 3 0 5" stroke="#f5ce33" strokeWidth="2" />
      </g>
    ),
  },
  {
    name: "文件资源管理器",
    art: (
      <g>
        <path d="M1 3h8l2 3h12v14H1z" fill="#f9d979" />
        <path d="M1 8h22v12H1z" fill="#fce8a2" />
        <path d="M5 21v-8h14v8h-4v-4H9v4z" fill="#3ea9de" />
      </g>
    ),
  },
  {
    name: "广联达",
    bar: true,
    art: (
      <path
        d="M24 2c-1 3-3 4-6 4-10-2-12 11-5 12 4 .5 5-3 4-5l-4-1c3-3 9-1 9 3 0 5-4 8-10 8C0 23-3 8 6 3 4 3 3 2 4 0c3 3 12 3 20 2z"
        fill="#1d9bf0"
      />
    ),
  },
  {
    name: "360浏览器",
    bar: true,
    art: (
      <g fill="none">
        <circle cx="12" cy="12" r="11" fill="#4fbb2e" stroke="#bff0a5" />
        <path d="M7 13h10c0-7-10-7-10 0s8 6 10 3" stroke="#fff" strokeWidth="2.800" />
        <path d="M3 20C0 15 15 2 21 5" stroke="#e7ffd8" />
      </g>
    ),
  },
  {
    name: "记事",
    bar: true,
    art: (
      <g>
        <rect x=".5" y="1" width="23" height="22" rx="2" fill="#f19a1a" stroke="#ffd17b" />
        <path d="m3 6 14-1 3 14-13 2z" fill="#fff7dc" />
        <path d="m6 9 8-1M7 12l6-1M8 15l4-1" stroke="#b58c4f" />
        <path d="M21 1 11 15l-1 3 3-2L23 3z" fill="#8e3b13" />
      </g>
    ),
  },
];

function Taskbar() {
  return (
    <div className="flex h-10 shrink-0 items-stretch bg-[#020b0e] text-xs leading-4 text-white">
      <button type="button" aria-label="开始" className="flex w-12 items-center justify-center bg-black">
        <Svg>
          <path d="M0 2.200 6.500 1.300v6.200H0zM7.500 1.200 16 0v7.500H7.500zM0 8.500h6.500v6.200L0 13.800zM7.500 8.500H16V16l-8.500-1.200z" fill="#fff" />
        </Svg>
      </button>
      <label className="flex w-[344px] items-center bg-[#333] pl-2">
        <span className="size-[22px] shrink-0 rounded-full border-[3px] border-[#f0f0f0]" />
        <input aria-label="搜索" placeholder="在这里输入你要搜索的内容" className="ml-1.5 min-w-0 flex-1 bg-transparent text-sm placeholder:text-[#9a9a9a]" />
        <LuMic size={17} className="mr-3 text-[#b0b0b0]" strokeWidth={1.5} />
      </label>
      <button type="button" aria-label="任务视图" className="flex w-[49px] items-center justify-center">
        <svg width="20" height="16" viewBox="0 0 20 16" fill="none">
          <path d="M4.500 1.500h11v13h-11zM3 3.500H.5v9H3M17 3.500h2.500v9H17" stroke="#fff" />
        </svg>
      </button>
      {apps.map((a) => (
        <button key={a.name} type="button" aria-label={a.name} className="flex w-[50px] flex-col items-center">
          <svg width="24" height="24" viewBox="0 0 24 24" className="mt-2 overflow-visible">{a.art}</svg>
          {a.bar && <span className="mt-auto h-0.5 w-10 bg-[#76b9ed]" />}
        </button>
      ))}
      <button type="button" aria-label="GGJ2013" className="flex w-[47px] flex-col items-center bg-[#343d40]">
        <span className="mt-2"><GlodonMark size={24} /></span>
        <span className="mt-auto h-0.5 w-full bg-[#76b9ed]" />
      </button>
      <div className="ml-auto flex items-center">
        <span>链接</span>
        <span className="ml-[19px] text-center leading-[17px]">55%<br />CPU使用</span>
        <div className="ml-5 flex items-center gap-[7px]">
          <svg width="12" height="8" viewBox="0 0 12 8" fill="none"><path d="m1 7 5-5 5 5" stroke="#fff" strokeWidth="1.300" /></svg>
          <svg width="18" height="12" viewBox="0 0 18 12" fill="none" className="ml-1">
            <path d="M4.500 3.500h11v6h-11zM16.500 5v3" stroke="#fff" />
            <path d="M7 5h7v3H7z" fill="#fff" />
            <path d="M1.500 0v3M4.500 0v3M0 3.500h6v2L3 7v4h5" stroke="#fff" />
          </svg>
          <svg width="14" height="14" viewBox="0 0 14 14" fill="none">
            <path d="M1 13C1 6 6 1 13 1M4 13c0-5 4-9 9-9M7 13c0-3 3-6 6-6M10 13c0-2 1-3 3-3" stroke="#ddd" strokeWidth="1.200" />
            <circle cx="12.500" cy="12.500" r="1.500" fill="#fff" />
          </svg>
          <svg width="16" height="14" viewBox="0 0 16 14" fill="none">
            <path d="M1 5h2.500L7 2v10L3.500 9H1zM9 5q1.500 2 0 4M11 3q3 4 0 8M13 1q4 6 0 12" stroke="#fff" />
          </svg>
          <svg width="23" height="14" viewBox="0 0 23 14" fill="none">
            <path d="M.5 1.500h22v11H.5z" stroke="#fff" />
            <path d="M3 4.500h17M3 7.500h17" stroke="#fff" strokeDasharray="1 1" />
            <path d="M6 10.500h11" stroke="#fff" />
          </svg>
          <svg width="16" height="16" viewBox="0 0 16 16" fill="none"><path d="M2 14 8 2l6 12M4.500 10h7" stroke="#fff" strokeWidth="2" /></svg>
          <svg width="17" height="17" viewBox="0 0 17 17" fill="none" className="ml-1">
            <rect x="1.500" y="1.500" width="14" height="14" rx="2" fill="#f04e23" transform="rotate(-8 8 8)" />
            <path d="M12 5c-3-1-6 0-6 1.500S12 8 12 10s-4 2.500-7 2" stroke="#fff" strokeWidth="2" />
          </svg>
        </div>
        <div className="ml-4 text-center leading-[18px]">15:01<br />2018/5/15</div>
        <svg width="26" height="26" viewBox="0 0 26 26" fill="none" aria-label="通知" role="img" className="ml-[18px]">
          <path d="M1 1h16v12H9l-3 3v-3H1z" fill="#fff" />
          <path d="M4 4.500h10M4 7.500h10M4 10.500h6" stroke="#000" />
          <circle cx="17" cy="17" r="7.500" fill="#2f3436" stroke="#8b8f90" />
          <text x="14" y="21" fontSize="11" fontWeight="bold" fill="#fff">1</text>
        </svg>
        <span className="mr-1 ml-3 h-10 w-px bg-[#5a5f60]" />
      </div>
    </div>
  );
}

export default function App() {
  return (
    <div className={`${ui} relative flex h-screen flex-col overflow-hidden bg-[#f0f0f0] text-black`}>
      <TitleBar />
      <MenuBar />
      <MainToolbar />
      <div className="flex min-h-0 flex-1">
        <ModulePanel />
        <div className="ml-[5px] flex min-w-0 flex-1 flex-col">
          <EditToolbar />
          <div className="flex min-h-0 flex-1">
            <ComponentPanel />
            <PropertyPanel />
          </div>
        </div>
      </div>
      <StatusBar />
      <Taskbar />
      <InputMethodBar />
      <SpeedBall />
    </div>
  );
}
